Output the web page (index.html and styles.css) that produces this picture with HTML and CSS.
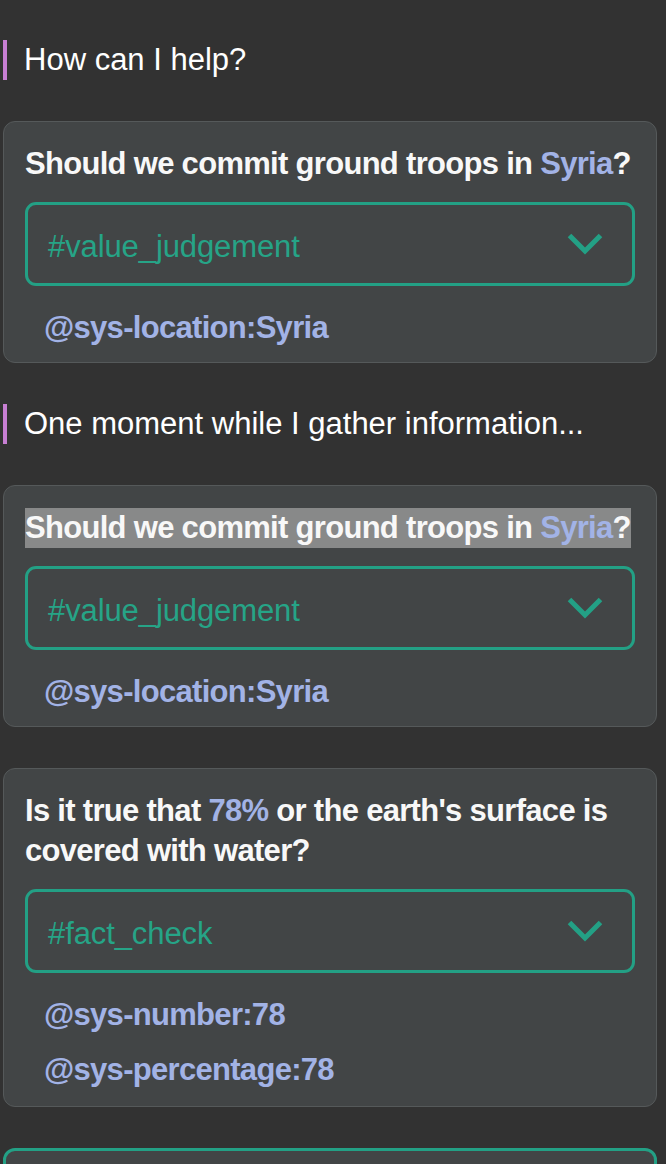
FILE: index.html
```html
<!DOCTYPE html>
<html lang="en">
<head>
<meta charset="utf-8">
<title>Conversation</title>
<link rel="stylesheet" href="styles.css">
</head>
<body>
<main class="feed">
  <p class="message">How can I help?</p>

  <section class="card">
    <h2 class="card-title">Should we commit ground troops in <span class="entity-ref">Syria</span>?</h2>
    <div class="intent-select">
      <span class="intent-label">#value_judgement</span>
      <svg class="chevron" viewBox="0 0 36 22" width="36" height="22" aria-hidden="true"><path d="M2.5 2.5 L18 18 L33.5 2.5" fill="none" stroke="#23a085" stroke-width="5"/></svg>
    </div>
    <ul class="entities">
      <li>@sys-location:Syria</li>
    </ul>
  </section>

  <p class="message">One moment while I gather information...</p>

  <section class="card">
    <h2 class="card-title"><span class="selection">Should we commit ground troops in <span class="entity-ref">Syria</span>?</span></h2>
    <div class="intent-select">
      <span class="intent-label">#value_judgement</span>
      <svg class="chevron" viewBox="0 0 36 22" width="36" height="22" aria-hidden="true"><path d="M2.5 2.5 L18 18 L33.5 2.5" fill="none" stroke="#23a085" stroke-width="5"/></svg>
    </div>
    <ul class="entities">
      <li>@sys-location:Syria</li>
    </ul>
  </section>

  <section class="card card-tall">
    <h2 class="card-title">Is it true that <span class="entity-ref">78%</span> or the earth's surface is covered with water?</h2>
    <div class="intent-select">
      <span class="intent-label">#fact_check</span>
      <svg class="chevron" viewBox="0 0 36 22" width="36" height="22" aria-hidden="true"><path d="M2.5 2.5 L18 18 L33.5 2.5" fill="none" stroke="#23a085" stroke-width="5"/></svg>
    </div>
    <ul class="entities">
      <li>@sys-number:78</li>
      <li>@sys-percentage:78</li>
    </ul>
  </section>

  <section class="card card-active" aria-label="Next question"></section>
</main>
</body>
</html>
```
FILE: styles.css
```css
html, body {
  margin: 0;
  padding: 0;
  background: #323232;
}

body {
  font-family: "Liberation Sans", Helvetica, Arial, sans-serif;
  color: #fafafa;
}

.feed {
  height: 100vh;
  overflow: hidden;
  box-sizing: border-box;
  padding: 40px 9px 0 3px;
  display: flex;
  flex-direction: column;
  gap: 41px;
}

.message {
  margin: 0;
  border-left: 4px solid #c77fd3;
  padding-left: 17px;
  font-size: 31px;
  line-height: 40px;
  height: 40px;
  color: #ffffff;
  white-space: nowrap;
}

.card {
  flex: none;
  background: #424546;
  border: 1px solid #55595a;
  border-radius: 12px;
  padding: 22px 21px 14px;
}

.card-tall {
  padding-bottom: 16px;
}

.card-active {
  border: 3px solid #23a085;
  min-height: 240px;
  padding: 0;
}

.card-title {
  margin: 0;
  font-size: 31px;
  line-height: 40px;
  font-weight: bold;
  letter-spacing: -0.7px;
  color: #f8f8f8;
}

.entity-ref {
  color: #a2b3e6;
}

.selection {
  display: inline-block;
  background: #888989;
}

.intent-select {
  margin-top: 18px;
  height: 78px;
  border: 3px solid #23a085;
  border-radius: 11px;
  display: flex;
  align-items: center;
  justify-content: space-between;
  padding: 0 29px 0 20px;
}

.intent-label {
  font-size: 31px;
  line-height: 40px;
  margin-top: 6px;
  color: #26a487;
  letter-spacing: -0.1px;
}

.chevron {
  display: block;
}

.entities {
  list-style: none;
  margin: 22px 0 0;
  padding: 0 0 0 19px;
  display: flex;
  flex-direction: column;
  gap: 15px;
}

.entities li {
  font-size: 31px;
  line-height: 40px;
  font-weight: bold;
  letter-spacing: -0.7px;
  color: #a2b3e6;
}
```
